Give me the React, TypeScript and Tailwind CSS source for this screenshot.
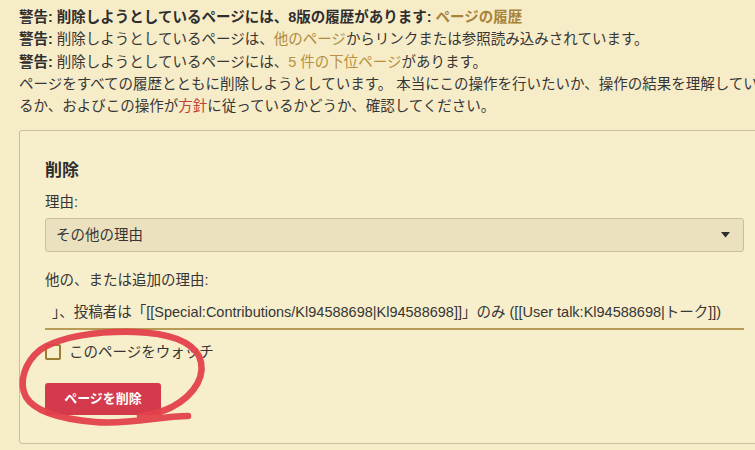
import React from "react";

const font = { fontFamily: '"Liberation Sans", "Noto Sans CJK JP", sans-serif' };

export default function App() {
  return (
    <div
      className="relative w-[755px] h-[450px] overflow-hidden bg-[#f6ecc8] text-[#363636]"
      style={font}
    >
      <div className="w-[800px] pl-[19px] pt-[6px] text-[14.5px] leading-[22.3px]">
        <div className="whitespace-nowrap font-bold text-[#2e2e2e]">
          警告: 削除しようとしているページには、8版の履歴があります:{" "}
          <span className="text-[#a8823a]">ページの履歴</span>
        </div>
        <div className="whitespace-nowrap">
          <b className="text-[#2e2e2e]">警告:</b> 削除しようとしているページは、
          <span className="text-[#b08a3e]">他のページ</span>からリンクまたは参照読み込みされています。
        </div>
        <div className="whitespace-nowrap">
          <b className="text-[#2e2e2e]">警告:</b> 削除しようとしているページには、
          <span className="text-[#b8903f]">5 件の下位ページ</span>があります。
        </div>
        <div className="whitespace-nowrap">
          ページをすべての履歴とともに削除しようとしています。 本当にこの操作を行いたいか、操作の結果を理解してい
        </div>
        <div className="whitespace-nowrap">
          るか、およびこの操作が<span className="text-[#c4413a]">方針</span>に従っているかどうか、確認してください。
        </div>

        <div className="mt-[13px] w-[750px] rounded-[3px] border border-[#cdbf9c] bg-[#f7eecb] pl-[25px] pr-[24px] pt-[28px] pb-[28px]">
          <div className="text-[17px] font-bold leading-[24px] text-[#2e2e2e]">削除</div>
          <div className="mt-[8px] leading-[22px]">理由:</div>
          <div className="mt-[5px] flex h-[34px] items-center justify-between rounded-[3px] border border-[#c9bd9b] bg-[#ebe1be] pl-[10px] pr-[13px]">
            <span>その他の理由</span>
            <svg width="9" height="6" viewBox="0 0 9 6">
              <path d="M0 0 H9 L4.5 5.5 Z" fill="#2f2f2f" />
            </svg>
          </div>
          <div className="mt-[17px] leading-[22px]">他の、または追加の理由:</div>
          <div className="mt-[5px] flex h-[34px] items-center border-b-2 border-[#b89b56] pl-[7px] whitespace-nowrap overflow-hidden">
            」、投稿者は「[[Special:Contributions/Kl94588698|Kl94588698]]」のみ ([[User talk:Kl94588698|トーク]])
          </div>
          <div className="mt-[12px] flex items-center gap-[8px]">
            <span className="inline-block h-[16px] w-[16px] rounded-[2px] border-2 border-[#9c7c30]" />
            <span className="leading-[20px]">このページをウォッチ</span>
          </div>
          <button className="mt-[21px] h-[32px] w-[116px] rounded-[3px] bg-[#d33a4b] text-[13px] font-bold text-white">
            ページを削除
          </button>
        </div>
      </div>

      <svg
        className="pointer-events-none absolute left-0 top-0"
        width="755"
        height="450"
        viewBox="0 0 755 450"
      >
        <path
          d="M188 416 C160 416 130 425 95 422 C60 419 35 412 26 397 C18 382 25 362 40 350 C60 336 100 331 135 332 C165 333 190 340 199 356 C207 374 196 394 172 407 C160 413 150 415 140 416"
          fill="none"
          stroke="#e3404a"
          strokeWidth="6.5"
          strokeLinecap="round"
          strokeLinejoin="round"
          opacity="0.95"
        />
      </svg>
    </div>
  );
}
